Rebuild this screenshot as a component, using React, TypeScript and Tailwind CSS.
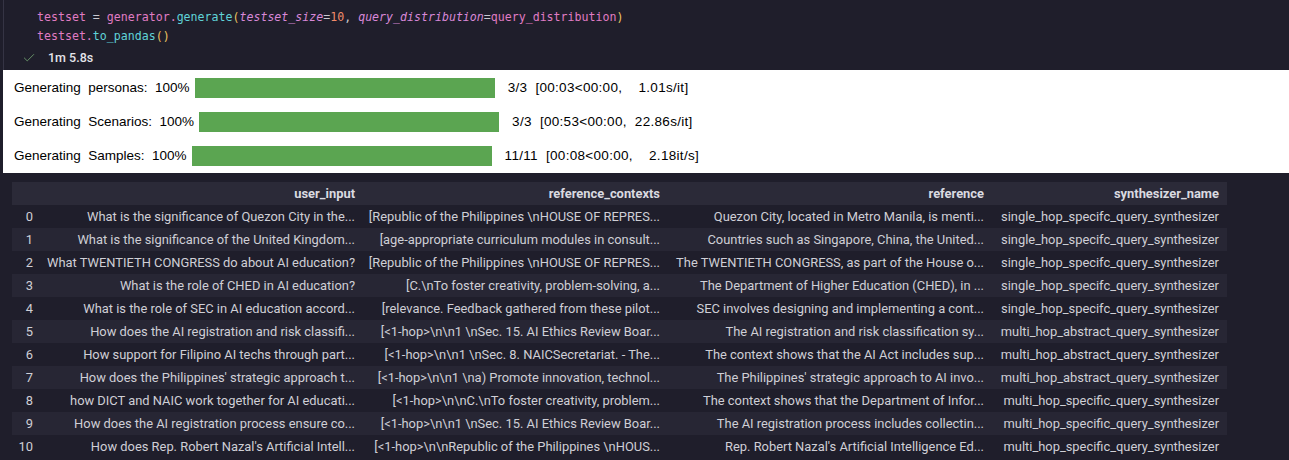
import { Check } from "lucide-react";

const bars = [
  { label: "Generating  personas:  100%", count: "3/3", time: "[00:03<00:00,    1.01s/it]" },
  { label: "Generating  Scenarios:  100%", count: "3/3", time: "[00:53<00:00,  22.86s/it]" },
  { label: "Generating  Samples:  100%", count: "11/11", time: "[00:08<00:00,    2.18it/s]" },
];

const single = "single_hop_specifc_query_synthesizer";
const abstract = "multi_hop_abstract_query_synthesizer";
const specific = "multi_hop_specific_query_synthesizer";

const rows = [
  ["What is the significance of Quezon City in the...", "[Republic of the Philippines \\nHOUSE OF REPRES...", "Quezon City, located in Metro Manila, is menti...", single],
  ["What is the significance of the United Kingdom...", "[age-appropriate curriculum modules in consult...", "Countries such as Singapore, China, the United...", single],
  ["What TWENTIETH CONGRESS do about AI education?", "[Republic of the Philippines \\nHOUSE OF REPRES...", "The TWENTIETH CONGRESS, as part of the House o...", single],
  ["What is the role of CHED in AI education?", "[C.\\nTo foster creativity, problem-solving, a...", "The Department of Higher Education (CHED), in ...", single],
  ["What is the role of SEC in AI education accord...", "[relevance. Feedback gathered from these pilot...", "SEC involves designing and implementing a cont...", single],
  ["How does the AI registration and risk classifi...", "[<1-hop>\\n\\n1 \\nSec. 15. AI Ethics Review Boar...", "The AI registration and risk classification sy...", abstract],
  ["How support for Filipino AI techs through part...", "[<1-hop>\\n\\n1 \\nSec. 8. NAICSecretariat. - The...", "The context shows that the AI Act includes sup...", abstract],
  ["How does the Philippines' strategic approach t...", "[<1-hop>\\n\\n1 \\na) Promote innovation, technol...", "The Philippines' strategic approach to AI invo...", abstract],
  ["how DICT and NAIC work together for AI educati...", "[<1-hop>\\n\\nC.\\nTo foster creativity, problem...", "The context shows that the Department of Infor...", specific],
  ["How does the AI registration process ensure co...", "[<1-hop>\\n\\n1 \\nSec. 15. AI Ethics Review Boar...", "The AI registration process includes collectin...", specific],
  ["How does Rep. Robert Nazal's Artificial Intell...", "[<1-hop>\\n\\nRepublic of the Philippines \\nHOUS...", "Rep. Robert Nazal's Artificial Intelligence Ed...", specific],
];

const cols = "grid grid-cols-[27px_324px_305px_324px_235px]";

const App = () => {
  return (
    <div className="min-h-screen bg-[#1f1e2b] font-['Roboto',sans-serif]">
      {/* code cell */}
      <div className="ml-[3px] h-[70px] border-l border-[#353444] pt-[8px]">
        <div className="pl-[33px] font-['DejaVu_Sans_Mono',monospace] text-[11.6px] leading-[19px] whitespace-pre">
          <div>
            <span className="text-[#e07cc4]">testset</span>
            <span className="text-[#c9c9d1]"> = </span>
            <span className="text-[#e07cc4]">generator.</span>
            <span className="text-[#5fd3d8]">generate</span>
            <span className="text-[#edc462]">(</span>
            <span className="italic text-[#d888d8]">testset_size</span>
            <span className="text-[#c9c9d1]">=</span>
            <span className="text-[#f28c6a]">10</span>
            <span className="text-[#c9c9d1]">, </span>
            <span className="italic text-[#d888d8]">query_distribution</span>
            <span className="text-[#c9c9d1]">=</span>
            <span className="text-[#e07cc4]">query_distribution</span>
            <span className="text-[#edc462]">)</span>
          </div>
          <div>
            <span className="text-[#e07cc4]">testset.</span>
            <span className="text-[#5fd3d8]">to_pandas</span>
            <span className="text-[#edc462]">()</span>
          </div>
        </div>
        <div className="flex items-center h-[24px] pl-[18px] gap-[12px]">
          <Check size={14} strokeWidth={1.5} className="text-[#6f9f6f]" />
          <span className="text-[12.5px] font-medium text-[#e4e4ea]">1m 5.8s</span>
        </div>
      </div>

      {/* progress output */}
      <div className="ml-[3px] bg-white pt-[1px] font-['Liberation_Sans',sans-serif] text-[13.5px] text-black">
        {bars.map((b) => (
          <div key={b.label} className="flex items-center h-[34px] pl-[11px]">
            <span className="whitespace-pre">{b.label}</span>
            <div className="ml-[5px] w-[300px] h-[20px] bg-[#5ba551]" />
            <span className="ml-[13px] whitespace-pre tracking-[0.3px]">{b.count}  {b.time}</span>
          </div>
        ))}
      </div>

      {/* dataframe */}
      <div className="ml-[12px] mt-[9px] w-[1215px] text-[12.9px] text-[#cfcfd6]">
        <div className={`${cols} h-[23px] items-center bg-[#2b2a38] font-bold text-[#dadae0]`}>
          <div />
          <div className="text-right pr-[8px]">user_input</div>
          <div className="text-right pr-[8px]">reference_contexts</div>
          <div className="text-right pr-[8px]">reference</div>
          <div className="text-right pr-[8px]">synthesizer_name</div>
        </div>
        {rows.map((r, i) => (
          <div
            key={i}
            className={`${cols} h-[23px] items-center whitespace-nowrap ${i % 2 === 1 ? "bg-[#272634]" : ""}`}
          >
            <div className="text-right pr-[6px]">{i}</div>
            <div className="text-right pr-[8px]">{r[0]}</div>
            <div className="text-right pr-[8px]">{r[1]}</div>
            <div className="text-right pr-[8px]">{r[2]}</div>
            <div className="text-right pr-[8px]">{r[3]}</div>
          </div>
        ))}
      </div>
    </div>
  );
};

export default App;
